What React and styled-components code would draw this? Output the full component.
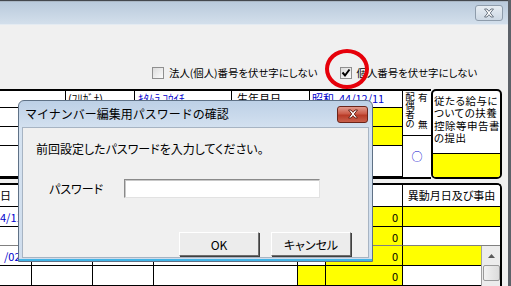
import React from 'react'
import styled, { createGlobalStyle } from 'styled-components'

const GlobalStyle = createGlobalStyle`
  html, body { margin: 0; padding: 0; background: #f0f0f0; }
  body { font-family: "Noto Sans CJK JP", "Noto Sans", sans-serif; }
  * { box-sizing: border-box; }
`

const YELLOW = '#ffff00'
const BLUE = '#0000cc'

const Frame = styled.div`
  position: relative;
  width: 511px;
  height: 286px;
  overflow: hidden;
  background: #f0f0f0;
  border-right: 3px solid #5c6168;
  display: flex;
  flex-direction: column;
`

const TitleBar = styled.div`
  height: 25px;
  flex: none;
  border-top: 1px solid #44484e;
  box-shadow: inset 0 1px 0 #a9b6c4, inset 0 -1px 0 #e4ebf2;
  background: linear-gradient(#b8c9db, #d4e0ec);
  display: flex;
  justify-content: flex-end;
  align-items: flex-start;
  padding: 4px 5px 0 0;
`

const WinClose = styled.div`
  width: 28px;
  height: 16px;
  border: 1px solid #8e9cab;
  border-radius: 3px;
  background: linear-gradient(#e7edf3, #cdd8e4);
  display: flex;
  align-items: center;
  justify-content: center;
`

const Options = styled.div`
  height: 64px;
  flex: none;
  display: flex;
  align-items: flex-start;
  padding: 41px 0 0 152px;
  font-size: 10.4px;
  font-feature-settings: "palt";
  color: #000;
`

const Option = styled.label`
  display: flex;
  align-items: center;
  gap: 5px;
  margin-right: ${p => p.$gap || 0}px;
  line-height: 13px;
`

const Box = styled.span`
  width: 12px;
  height: 12px;
  border: 1px solid #8f8f8f;
  background: linear-gradient(135deg, #dcdcdc, #fbfbfb);
  display: flex;
  align-items: center;
  justify-content: center;
`

const Upper = styled.div`
  display: flex;
  height: 90px;
  flex: none;
  font-size: 11px;
  font-feature-settings: "palt";
`

const UpperGrid = styled.div`
  width: 403px;
  display: grid;
  grid-template-columns: 66px 69px 97px 78px 93px;
  grid-template-rows: 17px 19px 19px 1fr;
  border-top: 2px solid #000;
  border-bottom: 2px solid #000;
`

const Cell = styled.div`
  border-right: 1px solid #000;
  border-bottom: 1px solid ${p => p.$line || '#000'};
  background: ${p => (p.$yellow ? YELLOW : '#fff')};
  color: ${p => (p.$blue ? BLUE : '#000')};
  font-size: ${p => p.$size || 11}px;
  line-height: 12px;
  padding: ${p => p.$pad || '2px 3px'};
  text-align: ${p => p.$align || 'left'};
  white-space: nowrap;
  overflow: hidden;
`

const SpouseCol = styled.div`
  width: 28px;
  display: flex;
  flex-direction: column;
  border-top: 2px solid #000;
  border-bottom: 2px solid #000;
  background: #fff;
`

const SpouseHead = styled.div`
  height: 45px;
  border-bottom: 1px solid #000;
  display: flex;
  gap: 3px;
  padding: 1px 0 6px 2px;
  font-size: 9.5px;
`

const VerticalText = styled.span`
  writing-mode: vertical-rl;
  letter-spacing: -0.6px;
  line-height: 10px;
`

const SplitColumn = styled.span`
  display: flex;
  flex-direction: column;
  justify-content: space-between;
  line-height: 10px;
`

const SpouseMark = styled.div`
  flex: 1;
  display: flex;
  align-items: center;
  justify-content: center;
  color: ${BLUE};
  font-size: 11px;
  padding-bottom: 2px;
`

const RoundBox = styled.div`
  width: 71px;
  border: 2px solid #000;
  border-radius: 5px;
  background: #fff;
  overflow: hidden;
  display: flex;
  flex-direction: column;
`

const RoundText = styled.div`
  flex: 1;
  border-bottom: 1px solid #000;
  font-size: 10.5px;
  line-height: 12.3px;
  padding: 4px 0 0 1px;
  letter-spacing: 0.5px;
  white-space: nowrap;
`

const RoundFill = styled.div`
  height: 23px;
  background: ${YELLOW};
`

const Lower = styled.div`
  position: relative;
  margin-top: 4px;
  width: 502px;
  flex: 1;
  display: grid;
  grid-template-columns: 32px 61px 61px 144px 28px 77px 97px;
  grid-template-rows: 22px 20px 19px 20px 1fr;
  border-top: 2px solid #000;
  border-right: 2px solid #000;
  border-top-right-radius: 5px;
  background: #fff;
  overflow: hidden;
  font-size: 11px;
  font-feature-settings: "palt";
`

const Num = styled(Cell)`
  text-align: right;
  padding: 4px 4px 0 0;
`

const Scroll = styled.div`
  position: absolute;
  right: 0;
  top: 61px;
  bottom: 0;
  width: 19px;
  background: #ececec;
  border-left: 1px solid #a0a0a0;
  display: flex;
  flex-direction: column;
  align-items: center;
  gap: 1px;
  padding-top: 1px;
`

const ScrollArrow = styled.div`
  width: 17px;
  height: 17px;
  display: flex;
  align-items: center;
  justify-content: center;
`

const Thumb = styled.div`
  width: 17px;
  height: 16px;
  border: 1px solid #9a9a9a;
  border-radius: 2px;
  background: linear-gradient(90deg, #f2f2f2, #dcdcdc);
`

const Dialog = styled.div`
  position: absolute;
  left: 18px;
  top: 100px;
  width: 355px;
  height: 162px;
  border: 1px solid #5f7186;
  border-radius: 6px 6px 0 0;
  background: linear-gradient(#bdd0e6, #d6e3f1 30px, #cfdded);
  box-shadow: inset 0 -2px 0 #42b4e6;
  display: flex;
  flex-direction: column;
`

const DialogTitle = styled.div`
  height: 26px;
  flex: none;
  display: flex;
  align-items: center;
  justify-content: space-between;
  padding: 0 4px 2px 6px;
  font-size: 12px;
  color: #000;
`

const RedClose = styled.div`
  width: 31px;
  height: 17px;
  margin-top: 2px;
  border: 1px solid #6b2419;
  border-radius: 3px;
  background: linear-gradient(#e19a8d, #cb5b48 45%, #b83b27 55%, #c8604c);
  display: flex;
  align-items: center;
  justify-content: center;
`

const Client = styled.div`
  flex: 1;
  margin: 0 3px 3px 3px;
  background: #f0f0f0;
  border: 1px solid #a7b4c3;
  padding: 14px 0 0 13px;
  font-size: 12px;
  font-feature-settings: "palt";
  color: #000;
  display: flex;
  flex-direction: column;
`

const Message = styled.div`
  line-height: 14px;
`

const FieldRow = styled.div`
  display: flex;
  align-items: center;
  margin-top: 23px;
  padding-left: 13px;
`

const FieldLabel = styled.span`
  width: 75px;
`

const Input = styled.div`
  width: 196px;
  height: 19px;
  background: #fff;
  border: 1px solid;
  border-color: #8a8a8a #e2e2e2 #e2e2e2 #8a8a8a;
  box-shadow: inset 1px 1px 0 #c8c8c8;
`

const Buttons = styled.div`
  display: flex;
  gap: 12px;
  margin-top: 34px;
  padding-left: 143px;
`

const Button = styled.div`
  width: 80px;
  height: 24px;
  border: 1px solid;
  border-color: #fff #6e6e6e #6e6e6e #fff;
  box-shadow: 1px 1px 0 #404040;
  background: #ececec;
  display: flex;
  align-items: center;
  justify-content: center;
  font-size: 12px;
`

const Ring = styled.div`
  position: absolute;
  left: 325px;
  top: 49px;
  width: 44px;
  height: 40px;
  border: 4px solid #e6000a;
  border-radius: 50%;
`

const XIcon = ({ fill, stroke, size = 10 }) => (
  <svg width={size + 2} height={size} viewBox="0 0 12 10">
    <path
      d="M1.5 1 L4 1 L6 3.3 L8 1 L10.5 1 L7.3 5 L10.5 9 L8 9 L6 6.7 L4 9 L1.5 9 L4.7 5 Z"
      fill={fill}
      stroke={stroke}
      strokeWidth="1"
      strokeLinejoin="round"
    />
  </svg>
)

const Check = () => (
  <svg width="10" height="10" viewBox="0 0 10 10">
    <path d="M1.5 4.5 L4 7.5 L8.5 1.5" fill="none" stroke="#000" strokeWidth="2" />
  </svg>
)

const lowerRows = [
  { line: '#000', head: true },
  { line: '#000', left: '4/11', five: true, six: true },
  { line: '#808080', five: true, six: false },
  { line: '#000', left: '/02', leftPad: '4px 0 0 4px', five: true, six: true },
  { line: '#000', four: true, five: true, six: false }
]

export default function App () {
  return (
    <>
      <GlobalStyle />
      <Frame>
        <TitleBar>
          <WinClose><XIcon fill="#fdfdfd" stroke="#6b7683" /></WinClose>
        </TitleBar>
        <Options>
          <Option $gap={22}>
            <Box />
            法人(個人)番号を伏せ字にしない
          </Option>
          <Option>
            <Box><Check /></Box>
            個人番号を伏せ字にしない
          </Option>
        </Options>

        <Upper>
          <UpperGrid>
            <Cell />
            <Cell $pad="1px 2px">(ﾌﾘｶﾞﾅ)</Cell>
            <Cell $blue $pad="1px 3px">ｷﾀﾑﾗ ｺｳｲﾁ</Cell>
            <Cell $pad="1px 5px">生年月日</Cell>
            <Cell $blue $pad="1px 2px">昭和&nbsp;&nbsp;44/12/11</Cell>

            <Cell />
            <Cell />
            <Cell />
            <Cell />
            <Cell $yellow />

            <Cell />
            <Cell />
            <Cell />
            <Cell />
            <Cell $yellow />

            <Cell />
            <Cell />
            <Cell />
            <Cell />
            <Cell />
          </UpperGrid>
          <SpouseCol>
            <SpouseHead>
              <VerticalText>配偶者の</VerticalText>
              <SplitColumn>
                <span>有</span>
                <span>無</span>
              </SplitColumn>
            </SpouseHead>
            <SpouseMark>○</SpouseMark>
          </SpouseCol>
          <RoundBox>
            <RoundText>従たる給与に<br />ついての扶養<br />控除等申告書<br />の提出</RoundText>
            <RoundFill />
          </RoundBox>
        </Upper>

        <Lower>
          {lowerRows.map((r, i) => (
            <React.Fragment key={i}>
              <Cell $line={r.line} $blue={!r.head} $pad={r.leftPad || '4px 0 0 0'}>
                {r.head ? '日' : r.left}
              </Cell>
              <Cell $line={r.line} />
              <Cell $line={r.line} />
              <Cell $line={r.line} />
              <Cell $line={r.line} $yellow={r.four} />
              {r.head
                ? <Cell $line={r.line} />
                : <Num $line={r.line} $yellow={r.five}>0</Num>}
              {r.head
                ? <Cell $line={r.line} $align="center" $pad="4px 0 0 0" style={{ borderRight: 0 }}>異動月日及び事由</Cell>
                : <Cell $line={r.line} $yellow={r.six} style={{ borderRight: 0 }} />}
            </React.Fragment>
          ))}
          <Scroll>
            <ScrollArrow>
              <svg width="7" height="4" viewBox="0 0 7 4"><path d="M0 4 L3.5 0 L7 4 Z" fill="#5a5a5a" /></svg>
            </ScrollArrow>
            <Thumb />
          </Scroll>
        </Lower>

        <Ring />

        <Dialog>
          <DialogTitle>
            <span>マイナンバー編集用パスワードの確認</span>
            <RedClose><XIcon fill="#fff" stroke="#6b2419" /></RedClose>
          </DialogTitle>
          <Client>
            <Message>前回設定したパスワードを入力してください。</Message>
            <FieldRow>
              <FieldLabel>パスワード</FieldLabel>
              <Input />
            </FieldRow>
            <Buttons>
              <Button>OK</Button>
              <Button>キャンセル</Button>
            </Buttons>
          </Client>
        </Dialog>
      </Frame>
    </>
  )
}
